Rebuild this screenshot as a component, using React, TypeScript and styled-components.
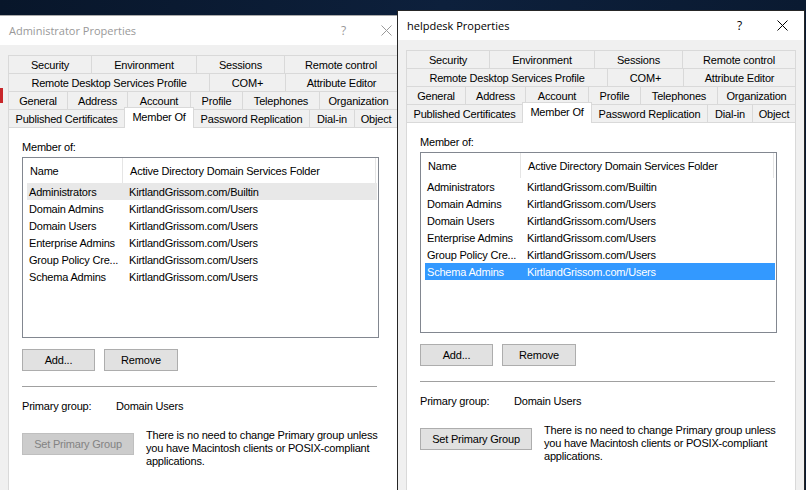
import React from 'react';
import styled, { createGlobalStyle, css } from 'styled-components';

const Global = createGlobalStyle`
  html, body { margin: 0; padding: 0; }
  body { width: 806px; height: 490px; overflow: hidden; background: #0a1a30; }
  #root { width: 806px; height: 490px; }
`;

const UI_FONT = `"Liberation Sans", Arial, sans-serif`;
const TITLE_FONT = `"Open Sans", "Noto Sans", "DejaVu Sans", sans-serif`;

const Desktop = styled.div`
  position: relative;
  width: 806px;
  height: 490px;
  overflow: hidden;
  background: linear-gradient(90deg, #08162a 0%, #0d203c 55%, #0a1a31 100%);
  font-family: ${UI_FONT};
  font-size: 11px;
  letter-spacing: -0.2px;
  color: #000;
`;

const WindowFrame = styled.div<{ $active?: boolean; $left: number; $top: number; $w: number }>`
  position: absolute;
  left: ${(p) => p.$left}px;
  top: ${(p) => p.$top}px;
  width: ${(p) => p.$w}px;
  height: 520px;
  box-sizing: border-box;
  display: flex;
  flex-direction: column;
  background: #f0f0f0;
  border: 1px solid ${(p) => (p.$active ? '#262626' : '#aaaaaa')};
  z-index: ${(p) => (p.$active ? 2 : 1)};
`;

const TitleBar = styled.div`
  flex: none;
  height: 29px;
  display: flex;
  align-items: center;
  padding-left: 9px;
  background: #ffffff;
`;

const TitleText = styled.span<{ $active?: boolean }>`
  flex: 1;
  font-family: ${TITLE_FONT};
  font-size: 11px;
  letter-spacing: 0;
  color: ${(p) => (p.$active ? '#000000' : '#999999')};
  white-space: nowrap;
`;

const CaptionButton = styled.div<{ $active?: boolean }>`
  flex: none;
  width: 43px;
  height: 29px;
  display: flex;
  align-items: center;
  justify-content: center;
  font-family: ${TITLE_FONT};
  font-size: 12px;
  letter-spacing: 0;
  color: ${(p) => (p.$active ? '#000000' : '#999999')};
`;

const Body = styled.div`
  flex: 1;
  display: flex;
  flex-direction: column;
  padding: 10px 8px 0 8px;
`;

const TabStrip = styled.div`
  display: flex;
  flex-direction: column;
  width: 390px;
`;

const TabRow = styled.div`
  display: flex;
  height: 18px;
`;

const Tab = styled.div<{ $w: number; $selected?: boolean }>`
  box-sizing: border-box;
  flex: none;
  width: ${(p) => p.$w}px;
  height: 18px;
  display: flex;
  align-items: center;
  justify-content: center;
  border-top: 1px solid #d9d9d9;
  border-left: 1px solid #d9d9d9;
  background: #f0f0f0;
  white-space: nowrap;
  &:last-child {
    border-right: 1px solid #d9d9d9;
  }
  ${(p) =>
    p.$selected &&
    css`
      position: relative;
      z-index: 1;
      height: 21px;
      margin-top: -2px;
      padding-bottom: 3px;
      border-right: 1px solid #d9d9d9;
      background: #ffffff;
      & + div {
        border-left: none;
      }
    `}
`;

const Panel = styled.div`
  flex: 1;
  box-sizing: border-box;
  width: 390px;
  display: flex;
  flex-direction: column;
  padding: 13px 0 0 13px;
  background: #ffffff;
  border: 1px solid #d9d9d9;
`;

const Label = styled.div`
  line-height: 13px;
  height: 13px;
  margin-bottom: 3px;
`;

const ListBox = styled.div`
  box-sizing: border-box;
  width: 357px;
  height: 181px;
  border: 1px solid #828790;
  background: #ffffff;
  display: flex;
  flex-direction: column;
`;

const HeaderRow = styled.div`
  display: flex;
  height: 25px;
`;

const HeaderCell = styled.div<{ $w: number }>`
  box-sizing: border-box;
  width: ${(p) => p.$w}px;
  height: 25px;
  display: flex;
  align-items: center;
  padding-left: 7px;
  border-right: 1px solid #e5e5e5;
  white-space: nowrap;
`;

const Row = styled.div<{ $state: 'none' | 'active' | 'inactive' }>`
  display: flex;
  align-items: center;
  height: 17px;
  margin: 0 1px 0 4px;
  white-space: nowrap;
  background: ${(p) =>
    p.$state === 'active' ? '#3399ff' : p.$state === 'inactive' ? '#e8e8e8' : 'transparent'};
  color: ${(p) => (p.$state === 'active' ? '#ffffff' : '#000000')};
`;

const NameCell = styled.div`
  box-sizing: border-box;
  width: 95px;
  padding-left: 2px;
  overflow: hidden;
`;

const FolderCell = styled.div`
  padding-left: 7px;
`;

const ButtonRow = styled.div`
  display: flex;
  gap: 9px;
  margin-top: 11px;
`;

const Button = styled.button<{ $w: number }>`
  box-sizing: border-box;
  width: ${(p) => p.$w}px;
  height: 22px;
  padding: 0;
  margin: 0;
  background: #e1e1e1;
  border: 1px solid #adadad;
  font-family: ${UI_FONT};
  font-size: 11px;
  letter-spacing: -0.2px;
  color: #000000;
  &:disabled {
    background: #cccccc;
    border-color: #bfbfbf;
    color: #838383;
  }
`;

const Separator = styled.div`
  width: 355px;
  height: 1px;
  margin-top: 15px;
  background: #a0a0a0;
`;

const PrimaryRow = styled.div`
  display: flex;
  margin-top: 13px;
  line-height: 13px;
`;

const PrimaryLabel = styled.div`
  width: 94px;
`;

const SetRow = styled.div`
  display: flex;
  align-items: flex-start;
  gap: 12px;
  margin-top: 16px;
`;

const SetButton = styled(Button)`
  margin-top: 4px;
`;

const HelpText = styled.div`
  line-height: 13px;
  white-space: nowrap;
`;

const EdgeMark = styled.div`
  position: absolute;
  left: 0;
  top: 88px;
  width: 3px;
  height: 15px;
  background: #c8262a;
  z-index: 3;
`;

type TabDef = { label: string; w: number; selected?: boolean };

const TAB_ROWS: TabDef[][] = [
  [
    { label: 'Security', w: 83 },
    { label: 'Environment', w: 105 },
    { label: 'Sessions', w: 88 },
    { label: 'Remote control', w: 114 },
  ],
  [
    { label: 'Remote Desktop Services Profile', w: 201 },
    { label: 'COM+', w: 76 },
    { label: 'Attribute Editor', w: 113 },
  ],
  [
    { label: 'General', w: 59 },
    { label: 'Address', w: 60 },
    { label: 'Account', w: 63 },
    { label: 'Profile', w: 52 },
    { label: 'Telephones', w: 77 },
    { label: 'Organization', w: 79 },
  ],
  [
    { label: 'Published Certificates', w: 116 },
    { label: 'Member Of', w: 70, selected: true },
    { label: 'Password Replication', w: 115 },
    { label: 'Dial-in', w: 45 },
    { label: 'Object', w: 44 },
  ],
];

const GROUPS: [string, string][] = [
  ['Administrators', 'KirtlandGrissom.com/Builtin'],
  ['Domain Admins', 'KirtlandGrissom.com/Users'],
  ['Domain Users', 'KirtlandGrissom.com/Users'],
  ['Enterprise Admins', 'KirtlandGrissom.com/Users'],
  ['Group Policy Cre...', 'KirtlandGrissom.com/Users'],
  ['Schema Admins', 'KirtlandGrissom.com/Users'],
];

const CloseIcon: React.FC<{ color: string }> = ({ color }) => (
  <svg width="11" height="11" viewBox="0 0 11 11">
    <path d="M0.5 0.5 L10.5 10.5 M10.5 0.5 L0.5 10.5" stroke={color} strokeWidth="1" fill="none" />
  </svg>
);

type DialogProps = {
  title: string;
  active?: boolean;
  left: number;
  top: number;
  width: number;
  selectedIndex: number;
};

const PropertiesDialog: React.FC<DialogProps> = ({ title, active, left, top, width, selectedIndex }) => (
  <WindowFrame $active={active} $left={left} $top={top} $w={width}>
    <TitleBar>
      <TitleText $active={active}>{title}</TitleText>
      <CaptionButton $active={active}>?</CaptionButton>
      <CaptionButton $active={active}>
        <CloseIcon color={active ? '#000000' : '#999999'} />
      </CaptionButton>
    </TitleBar>
    <Body>
      <TabStrip>
        {TAB_ROWS.map((row, i) => (
          <TabRow key={i}>
            {row.map((t) => (
              <Tab key={t.label} $w={t.w} $selected={t.selected}>
                {t.label}
              </Tab>
            ))}
          </TabRow>
        ))}
      </TabStrip>
      <Panel>
        <Label>Member of:</Label>
        <ListBox>
          <HeaderRow>
            <HeaderCell $w={100}>Name</HeaderCell>
            <HeaderCell $w={253}>Active Directory Domain Services Folder</HeaderCell>
          </HeaderRow>
          {GROUPS.map(([name, folder], i) => (
            <Row
              key={name}
              $state={i === selectedIndex ? (active ? 'active' : 'inactive') : 'none'}
            >
              <NameCell>{name}</NameCell>
              <FolderCell>{folder}</FolderCell>
            </Row>
          ))}
        </ListBox>
        <ButtonRow>
          <Button $w={73}>Add...</Button>
          <Button $w={74}>Remove</Button>
        </ButtonRow>
        <Separator />
        <PrimaryRow>
          <PrimaryLabel>Primary group:</PrimaryLabel>
          <div>Domain Users</div>
        </PrimaryRow>
        <SetRow>
          <SetButton $w={112} disabled={!active}>
            Set Primary Group
          </SetButton>
          <HelpText>
            There is no need to change Primary group unless
            <br />
            you have Macintosh clients or POSIX-compliant
            <br />
            applications.
          </HelpText>
        </SetRow>
      </Panel>
    </Body>
  </WindowFrame>
);

export default function App() {
  return (
    <Desktop>
      <Global />
      <PropertiesDialog
        title="Administrator Properties"
        left={-1}
        top={15}
        width={410}
        selectedIndex={0}
      />
      <PropertiesDialog
        title="helpdesk Properties"
        active
        left={397}
        top={10}
        width={408}
        selectedIndex={5}
      />
      <EdgeMark />
    </Desktop>
  );
}
